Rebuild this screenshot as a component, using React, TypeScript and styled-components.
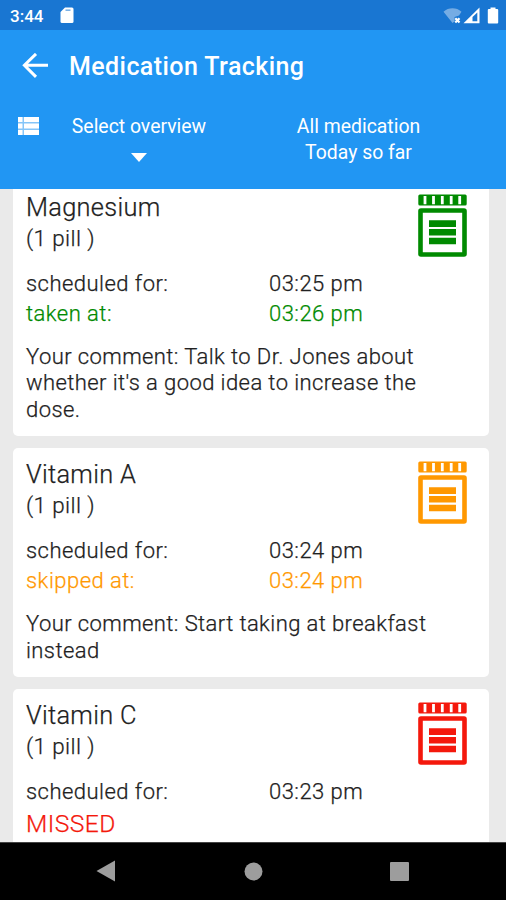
import React from 'react';
import styled, { createGlobalStyle } from 'styled-components';

const GlobalStyle = createGlobalStyle`
  * { box-sizing: border-box; }
  body { margin: 0; background: #000; }
`;

const Screen = styled.div`
  display: flex;
  flex-direction: column;
  width: 506px;
  height: 900px;
  overflow: hidden;
  background: #eaeaea;
  color: #212121;
  font-family: Roboto, 'Liberation Sans', sans-serif;
`;

const StatusBar = styled.header`
  display: flex;
  align-items: center;
  flex: none;
  height: 30px;
  padding: 1px 7px 0 10px;
  background: #1976d2;
  color: #fff;
`;

const Clock = styled.span`
  width: 50px;
  font-size: 17px;
  font-weight: 500;
  line-height: 28px;
`;

const StatusIcons = styled.div`
  display: flex;
  align-items: center;
  margin-left: auto;
`;

const AppBar = styled.div`
  flex: none;
  height: 158.5px;
  background: #2196f3;
  color: #fff;
`;

const TitleRow = styled.div`
  display: flex;
  align-items: center;
  height: 72px;
  padding-left: 22px;
`;

const Title = styled.h1`
  margin: 1px 0 0 20px;
  font-size: 25px;
  font-weight: 500;
  line-height: 30px;
  letter-spacing: 0.42px;
  white-space: nowrap;
`;

const FilterRow = styled.div`
  display: flex;
  align-items: flex-start;
  padding: 12px 0 0 18px;
  font-size: 19.4px;
  line-height: 26px;
`;

const ListIcon = styled.svg`
  flex: none;
  margin-top: 3px;
`;

const Overview = styled.div`
  display: flex;
  flex-direction: column;
  align-items: center;
  width: 200px;
`;

const Caret = styled.svg`
  display: block;
  margin-top: 13px;
`;

const Selection = styled.div`
  width: 239px;
  text-align: center;
`;

const List = styled.main`
  display: flex;
  flex-direction: column;
  gap: 12px;
  flex: none;
  height: 653px;
  padding: 0 17px 0 13px;
  overflow: hidden;
`;

const Card = styled.article<{ $scrolled?: boolean }>`
  flex: none;
  margin-top: ${(p) => (p.$scrolled ? '-8px' : '0')};
  padding: 10px 13px 13px;
  border-radius: 5px;
  background: #fff;
  font-weight: 300;
  -webkit-text-stroke: 0.25px currentColor;
`;

const CardHead = styled.div`
  display: flex;
  justify-content: space-between;
  height: 63px;
  padding-right: 9px;
`;

const Name = styled.h2`
  margin: 0;
  font-size: 25.4px;
  font-weight: 300;
  line-height: 32px;
  letter-spacing: 0.3px;
`;

const Dose = styled.div`
  font-size: 22.4px;
  line-height: 31px;
  letter-spacing: 0.4px;
`;

const BottleIcon = styled.svg`
  display: block;
  margin-top: 3px;
`;

const Times = styled.div`
  margin: 15px 0;
  font-size: 22px;
  line-height: 30px;
  letter-spacing: 0.47px;
`;

const TimeRow = styled.div<{ $color?: string }>`
  display: grid;
  grid-template-columns: 243px 1fr;
  color: ${(p) => p.$color ?? 'inherit'};
`;

const Missed = styled.div<{ $color: string }>`
  padding-top: 2px;
  font-size: 24.6px;
  color: ${(p) => p.$color};
`;

const Comment = styled.p`
  margin: 0;
  font-size: 22px;
  line-height: 26.5px;
  letter-spacing: 0.41px;
  white-space: pre-line;
`;

const NavBar = styled.nav`
  display: flex;
  align-items: center;
  flex: none;
  height: 58.5px;
  padding: 0 0 0 96px;
  background: #000;
  border-top: 1px solid #444;
`;

const NavIcon = styled.svg<{ $gap?: number }>`
  display: block;
  margin-left: ${(p) => p.$gap ?? 0}px;
  fill: #9d9d9d;
`;

interface Medication {
  name: string;
  scheduled: string;
  color: string;
  actionLabel?: string;
  actionTime?: string;
  comment?: string;
}

const medications: Medication[] = [
  {
    name: 'Magnesium',
    scheduled: '03:25 pm',
    color: '#008a00',
    actionLabel: 'taken at:',
    actionTime: '03:26 pm',
    comment: "Your comment: Talk to Dr. Jones about\nwhether it's a good idea to increase the\ndose.",
  },
  {
    name: 'Vitamin A',
    scheduled: '03:24 pm',
    color: '#ff9800',
    actionLabel: 'skipped at:',
    actionTime: '03:24 pm',
    comment: 'Your comment: Start taking at breakfast\ninstead',
  },
  { name: 'Vitamin C', scheduled: '03:23 pm', color: '#f4180c' },
];

const Bottle = ({ color }: { color: string }) => (
  <BottleIcon width="49" height="63" viewBox="0 0 49 63">
    <rect x="0.3" y="0.5" width="48.4" height="11" rx="1.5" fill={color} />
    <path d="M7 2v8.200M15.500 2v8.200M24.300 2v8.200M33.200 2v8.200M41.700 2v8.200" stroke="#fff" strokeWidth="2.800" />
    <rect x="2.5" y="16.5" width="44" height="44" rx="0.5" fill="none" stroke={color} strokeWidth="4.6" />
    <path d="M11 29.6h27M11 38.3h27M11 47h27" stroke={color} strokeWidth="6.6" />
  </BottleIcon>
);

const MedicationCard = ({ med, scrolled }: { med: Medication; scrolled?: boolean }) => (
  <Card $scrolled={scrolled}>
    <CardHead>
      <div>
        <Name>{med.name}</Name>
        <Dose>(1 pill )</Dose>
      </div>
      <Bottle color={med.color} />
    </CardHead>
    <Times>
      <TimeRow>
        <span>scheduled for:</span>
        <span>{med.scheduled}</span>
      </TimeRow>
      {med.actionLabel ? (
        <TimeRow $color={med.color}>
          <span>{med.actionLabel}</span>
          <span>{med.actionTime}</span>
        </TimeRow>
      ) : (
        <Missed $color={med.color}>MISSED</Missed>
      )}
    </Times>
    {med.comment && <Comment>{med.comment}</Comment>}
  </Card>
);

export default function App() {
  return (
    <>
      <GlobalStyle />
      <Screen>
        <StatusBar>
          <Clock>3:44</Clock>
          <svg width="14" height="17" viewBox="0 0 14 17">
            <path d="M5 0.5h7a1.5 1.5 0 0 1 1.5 1.5v12.500a1.500 1.500 0 0 1-1.500 1.500H2A1.500 1.500 0 0 1 .5 14.500V5z" fill="#fff" />
            <path d="M5.500 3.200h5" stroke="#1976d2" strokeOpacity="0.6" strokeWidth="1.500" />
          </svg>
          <StatusIcons>
            <svg width="56" height="18" viewBox="0 0 56 18">
              <path d="M0.500 4.800C5.500.2 13.500.2 18.500 4.800L16 8.500l-4.500 1.500v4.500L9.500 16z" fill="#fff" fillOpacity="0.4" />
              <path d="M12.300 11.300l4.200 4.200M16.500 11.300l-4.200 4.200" stroke="#fff" strokeWidth="2.200" />
              <path d="M36.500 0.500V16.300H20.500z" fill="#fff" />
              <path d="M34.300 5.500v8.700h-4.800V10z" fill="#1976d2" />
              <path d="M47.500 0.500h5v1.500h1.700a1 1 0 0 1 1 1v12.500a1 1 0 0 1-1 1h-8.400a1 1 0 0 1-1-1V3a1 1 0 0 1 1-1h1.700z" fill="#fff" />
            </svg>
          </StatusIcons>
        </StatusBar>
        <AppBar>
          <TitleRow>
            <svg width="27" height="26" viewBox="0 0 27 26" fill="none" stroke="#fff" strokeWidth="3">
              <path d="M26 12.300H3M14 .9L2.400 12.300 14 23.900" />
            </svg>
            <Title>Medication Tracking</Title>
          </TitleRow>
          <FilterRow>
            <ListIcon width="21" height="18" viewBox="0 0 21 18">
              <rect width="21" height="18" fill="#fff" fillOpacity="0.45" />
              <path d="M0 2.600h4.500M6 2.600h15M0 9h4.500M6 9h15M0 15.400h4.500M6 15.400h15" stroke="#fff" strokeWidth="5" />
            </ListIcon>
            <Overview>
              <span>Select overview</span>
              <Caret width="16" height="9" viewBox="0 0 16 9">
                <path d="M0 0h16L8 9z" fill="#fff" />
              </Caret>
            </Overview>
            <Selection>
              <div>All medication</div>
              <div>Today so far</div>
            </Selection>
          </FilterRow>
        </AppBar>
        <List>
          {medications.map((med, i) => (
            <MedicationCard key={med.name} med={med} scrolled={i === 0} />
          ))}
        </List>
        <NavBar>
          <NavIcon width="19" height="22" viewBox="0 0 19 22">
            <path d="M0.500 11L19 0.500v21z" />
          </NavIcon>
          <NavIcon $gap={129} width="19" height="19" viewBox="0 0 19 19">
            <circle cx="9.500" cy="9.500" r="9" />
          </NavIcon>
          <NavIcon $gap={127} width="19" height="19" viewBox="0 0 19 19">
            <rect width="19" height="19" rx="1" />
          </NavIcon>
        </NavBar>
      </Screen>
    </>
  );
}
